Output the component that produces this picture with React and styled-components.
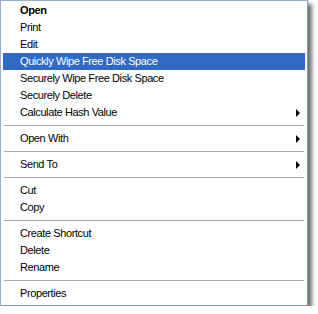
import React from 'react';
import styled, { createGlobalStyle } from 'styled-components';

const GlobalStyle = createGlobalStyle`
  html, body {
    margin: 0;
    padding: 0;
    background: #fff;
  }
`;

const items = [
    { label: 'Open', bold: true },
    { label: 'Print' },
    { label: 'Edit' },
    { label: 'Quickly Wipe Free Disk Space', active: true },
    { label: 'Securely Wipe Free Disk Space' },
    { label: 'Securely Delete' },
    { label: 'Calculate Hash Value', sub: true },
    { sep: true },
    { label: 'Open With', sub: true },
    { sep: true },
    { label: 'Send To', sub: true },
    { sep: true },
    { label: 'Cut' },
    { label: 'Copy' },
    { sep: true },
    { label: 'Create Shortcut' },
    { label: 'Delete' },
    { label: 'Rename' },
    { sep: true },
    { label: 'Properties' },
];

const App = () => {
    return (
        <>
            <GlobalStyle />
            <Menu>
                {items.map((it, i) =>
                    it.sep ? (
                        <Separator key={i} />
                    ) : (
                        <Item key={i} $active={it.active} $bold={it.bold}>
                            <span>{it.label}</span>
                            {it.sub && <Arrow />}
                        </Item>
                    )
                )}
            </Menu>
        </>
    );
};

export default App;

const Menu = styled.div`
width: 308px;
padding: 1px 2px 3px 2px;
background: #fff;
border: 1px solid #9aaccb;
border-right-color: #8496b6;
border-bottom-color: #8496b6;
box-shadow: 4px 4px 4px rgba(0, 0, 0, 0.55);
box-sizing: border-box;
font-family: 'Liberation Sans', Arial, sans-serif;
font-size: 11px;
letter-spacing: -0.4px;
`;

const Item = styled.div`
display: flex;
align-items: center;
justify-content: space-between;
height: 17px;
line-height: 17px;
padding: 0 5px 0 17px;
color: ${p => (p.$active ? '#fff' : '#000')};
background: ${p => (p.$active ? '#316ac5' : 'transparent')};
font-weight: ${p => (p.$bold ? 'bold' : 'normal')};
white-space: nowrap;
`;

const Arrow = styled.i`
width: 0;
height: 0;
border-top: 4px solid transparent;
border-bottom: 4px solid transparent;
border-left: 4px solid #000;
`;

const Separator = styled.div`
height: 9px;
display: flex;
align-items: center;
padding: 0 1px;
&::after {
    content: '';
    flex: 1;
    height: 1px;
    background: #a6a6a6;
}
`;
